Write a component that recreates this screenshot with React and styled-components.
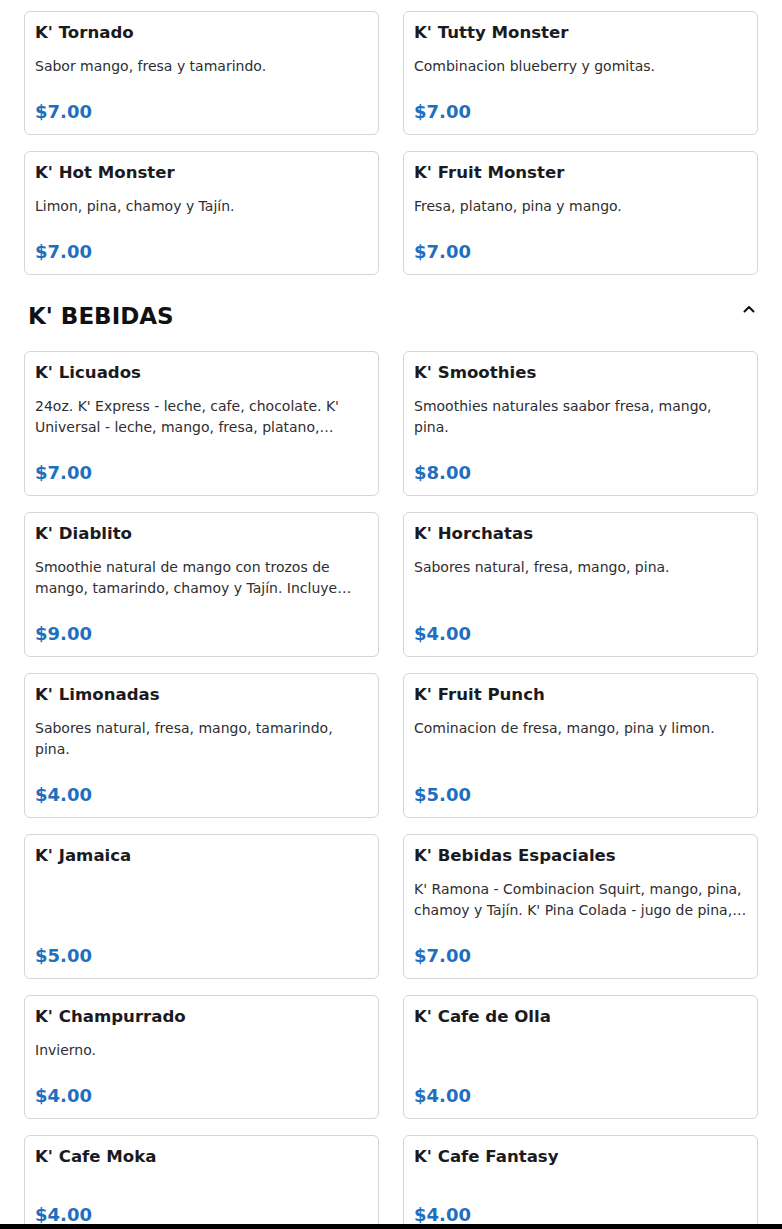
import styled, { createGlobalStyle } from "styled-components"

const GlobalStyle = createGlobalStyle`
    * {
        box-sizing: border-box;
    }

    body {
        margin: 0;
        background: #fff;
        font-family: "DejaVu Sans", Verdana, sans-serif;
        color: #1b1b1f;
    }
`

const topItems = [
    { name: "K' Tornado", desc: "Sabor mango, fresa y tamarindo.", price: 7 },
    { name: "K' Tutty Monster", desc: "Combinacion blueberry y gomitas.", price: 7 },
    { name: "K' Hot Monster", desc: "Limon, pina, chamoy y Tajín.", price: 7 },
    { name: "K' Fruit Monster", desc: "Fresa, platano, pina y mango.", price: 7 },
]

const bebidas = [
    { name: "K' Licuados", desc: "24oz. K' Express - leche, cafe, chocolate. K' Universal - leche, mango, fresa, platano, vainilla y avena.", price: 7 },
    { name: "K' Smoothies", desc: "Smoothies naturales saabor fresa, mango, pina.", price: 8 },
    { name: "K' Diablito", desc: "Smoothie natural de mango con trozos de mango, tamarindo, chamoy y Tajín. Incluye dulces enchilados.", price: 9 },
    { name: "K' Horchatas", desc: "Sabores natural, fresa, mango, pina.", price: 4 },
    { name: "K' Limonadas", desc: "Sabores natural, fresa, mango, tamarindo, pina.", price: 4 },
    { name: "K' Fruit Punch", desc: "Cominacion de fresa, mango, pina y limon.", price: 5 },
    { name: "K' Jamaica", desc: "", price: 5 },
    { name: "K' Bebidas Espaciales", desc: "K' Ramona - Combinacion Squirt, mango, pina, chamoy y Tajín. K' Pina Colada - jugo de pina, coco y leche.", price: 7 },
    { name: "K' Champurrado", desc: "Invierno.", price: 4 },
    { name: "K' Cafe de Olla", desc: "", price: 4 },
    { name: "K' Cafe Moka", desc: "", price: 4 },
    { name: "K' Cafe Fantasy", desc: "", price: 4 },
]

const MenuCard = ({ item }) => (
    <Card>
        <CardTitle>{item.name}</CardTitle>
        <CardDesc>{item.desc}</CardDesc>
        <Price>${item.price.toFixed(2)}</Price>
    </Card>
)

const ChevronUp = () => (
    <svg width="14" height="14" viewBox="0 0 14 14" fill="none">
        <polyline points="2.5,9.5 7,5 11.5,9.5" stroke="#111" strokeWidth="2" strokeLinecap="round" strokeLinejoin="round" />
    </svg>
)

export default function App() {
    return (
        <>
            <GlobalStyle />
            <Page>
                <CardGrid>
                    { topItems.map((item) => <MenuCard key={item.name} item={item} />) }
                </CardGrid>

                <SectionHeader>
                    <SectionTitle>K' BEBIDAS</SectionTitle>
                    <Toggle type="button" aria-label="Colapsar">
                        <ChevronUp />
                    </Toggle>
                </SectionHeader>

                <CardGrid>
                    { bebidas.map((item) => <MenuCard key={item.name} item={item} />) }
                </CardGrid>
            </Page>
            <BottomBar />
        </>
    )
}

const Page = styled.main`
    padding: 11px 24px 40px;
`

const CardGrid = styled.div`
    display: grid;
    grid-template-columns: 1fr 1fr;
    column-gap: 24px;
    row-gap: 16px;
`

const Card = styled.div`
    display: flex;
    flex-direction: column;
    border: 1px solid #d6d6d9;
    border-radius: 6px;
    padding: 8px 10px 9px;
    background: #fff;
`

const CardTitle = styled.h3`
    margin: 0;
    font-size: 16.6px;
    line-height: 25px;
    font-weight: 700;
    color: #1b1b1f;
`

const CardDesc = styled.p`
    margin: 11px 0 0;
    font-size: 14px;
    line-height: 21px;
    color: #2e2e33;
    display: -webkit-box;
    -webkit-line-clamp: 2;
    -webkit-box-orient: vertical;
    overflow: hidden;
`

const Price = styled.div`
    margin-top: auto;
    padding-top: 21px;
    font-size: 18px;
    line-height: 27px;
    font-weight: 700;
    color: #1f6fbf;
`

const SectionHeader = styled.div`
    display: flex;
    justify-content: space-between;
    align-items: flex-start;
    padding: 25px 2px 18px 4px;
`

const SectionTitle = styled.h2`
    margin: 0;
    font-size: 23px;
    line-height: 33px;
    font-weight: 700;
    color: #111;
`

const Toggle = styled.button`
    display: flex;
    border: none;
    background: none;
    padding: 0;
    margin-top: 2px;
    cursor: pointer;
`

const BottomBar = styled.div`
    position: fixed;
    left: 0;
    right: 0;
    bottom: 0;
    height: 5px;
    background: #000;
`
